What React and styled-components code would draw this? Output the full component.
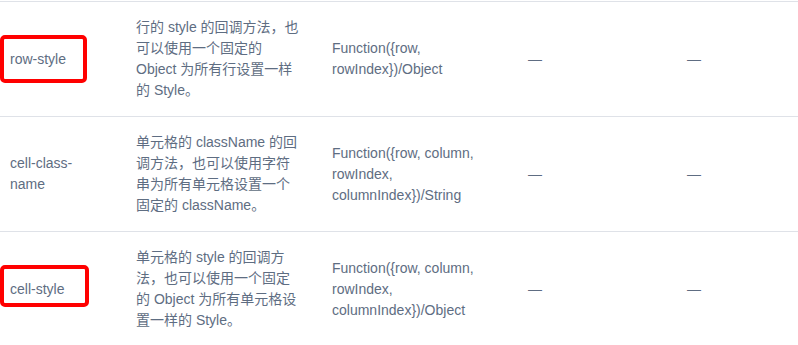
import styled, { createGlobalStyle } from "styled-components";

const GlobalStyle = createGlobalStyle`
  html, body {
    margin: 0;
    padding: 0;
    background: #fff;
    overflow: hidden;
  }
  body {
    font-family: "Liberation Sans", Arial, "Noto Sans CJK SC", sans-serif;
  }
`;

const Wrap = styled.div`
  width: 798px;
  padding-top: 1px;
  color: #5e6d82;
  font-size: 14px;
  line-height: 21px;
`;

const Table = styled.div`
  border-top: 1px solid #dfe2e8;
`;

const Row = styled.div`
  display: grid;
  grid-template-columns: 121px 196px 196px 159px 160px;
  align-items: center;
  border-bottom: 1px solid #dfe2e8;
`;

const Cell = styled.div`
  padding: 15px;
  padding-left: ${({ $first }) => ($first ? "10px" : "15px")};
  overflow-wrap: break-word;
`;

const Marked = styled.span`
  position: relative;
  display: inline-block;

  &::after {
    content: "";
    position: absolute;
    left: -10px;
    top: ${({ $top }) => $top}px;
    width: ${({ $w }) => $w}px;
    height: ${({ $h }) => $h}px;
    box-sizing: border-box;
    border: 4px solid #ff0000;
    border-radius: 5px;
    pointer-events: none;
  }
`;

const rows = [
  {
    name: "row-style",
    mark: { top: -14, w: 87, h: 48 },
    desc: "行的 style 的回调方法，也可以使用一个固定的 Object 为所有行设置一样的 Style。",
    type: ["Function({row,", "rowIndex})/Object"],
  },
  {
    name: "cell-class-name",
    desc: "单元格的 className 的回调方法，也可以使用字符串为所有单元格设置一个固定的 className。",
    type: ["Function({row, column,", "rowIndex,", "columnIndex})/String"],
  },
  {
    name: "cell-style",
    mark: { top: -14, w: 89, h: 42 },
    desc: "单元格的 style 的回调方法，也可以使用一个固定的 Object 为所有单元格设置一样的 Style。",
    type: ["Function({row, column,", "rowIndex,", "columnIndex})/Object"],
  },
];

export default function App() {
  return (
    <Wrap>
      <GlobalStyle />
      <Table>
        {rows.map((r) => (
          <Row key={r.name}>
            <Cell $first>
              {r.mark ? (
                <Marked $top={r.mark.top} $w={r.mark.w} $h={r.mark.h}>
                  {r.name}
                </Marked>
              ) : (
                r.name
              )}
            </Cell>
            <Cell>{r.desc}</Cell>
            <Cell>
              {r.type.map((t, i) => (
                <div key={i}>{t}</div>
              ))}
            </Cell>
            <Cell>—</Cell>
            <Cell>—</Cell>
          </Row>
        ))}
      </Table>
    </Wrap>
  );
}
